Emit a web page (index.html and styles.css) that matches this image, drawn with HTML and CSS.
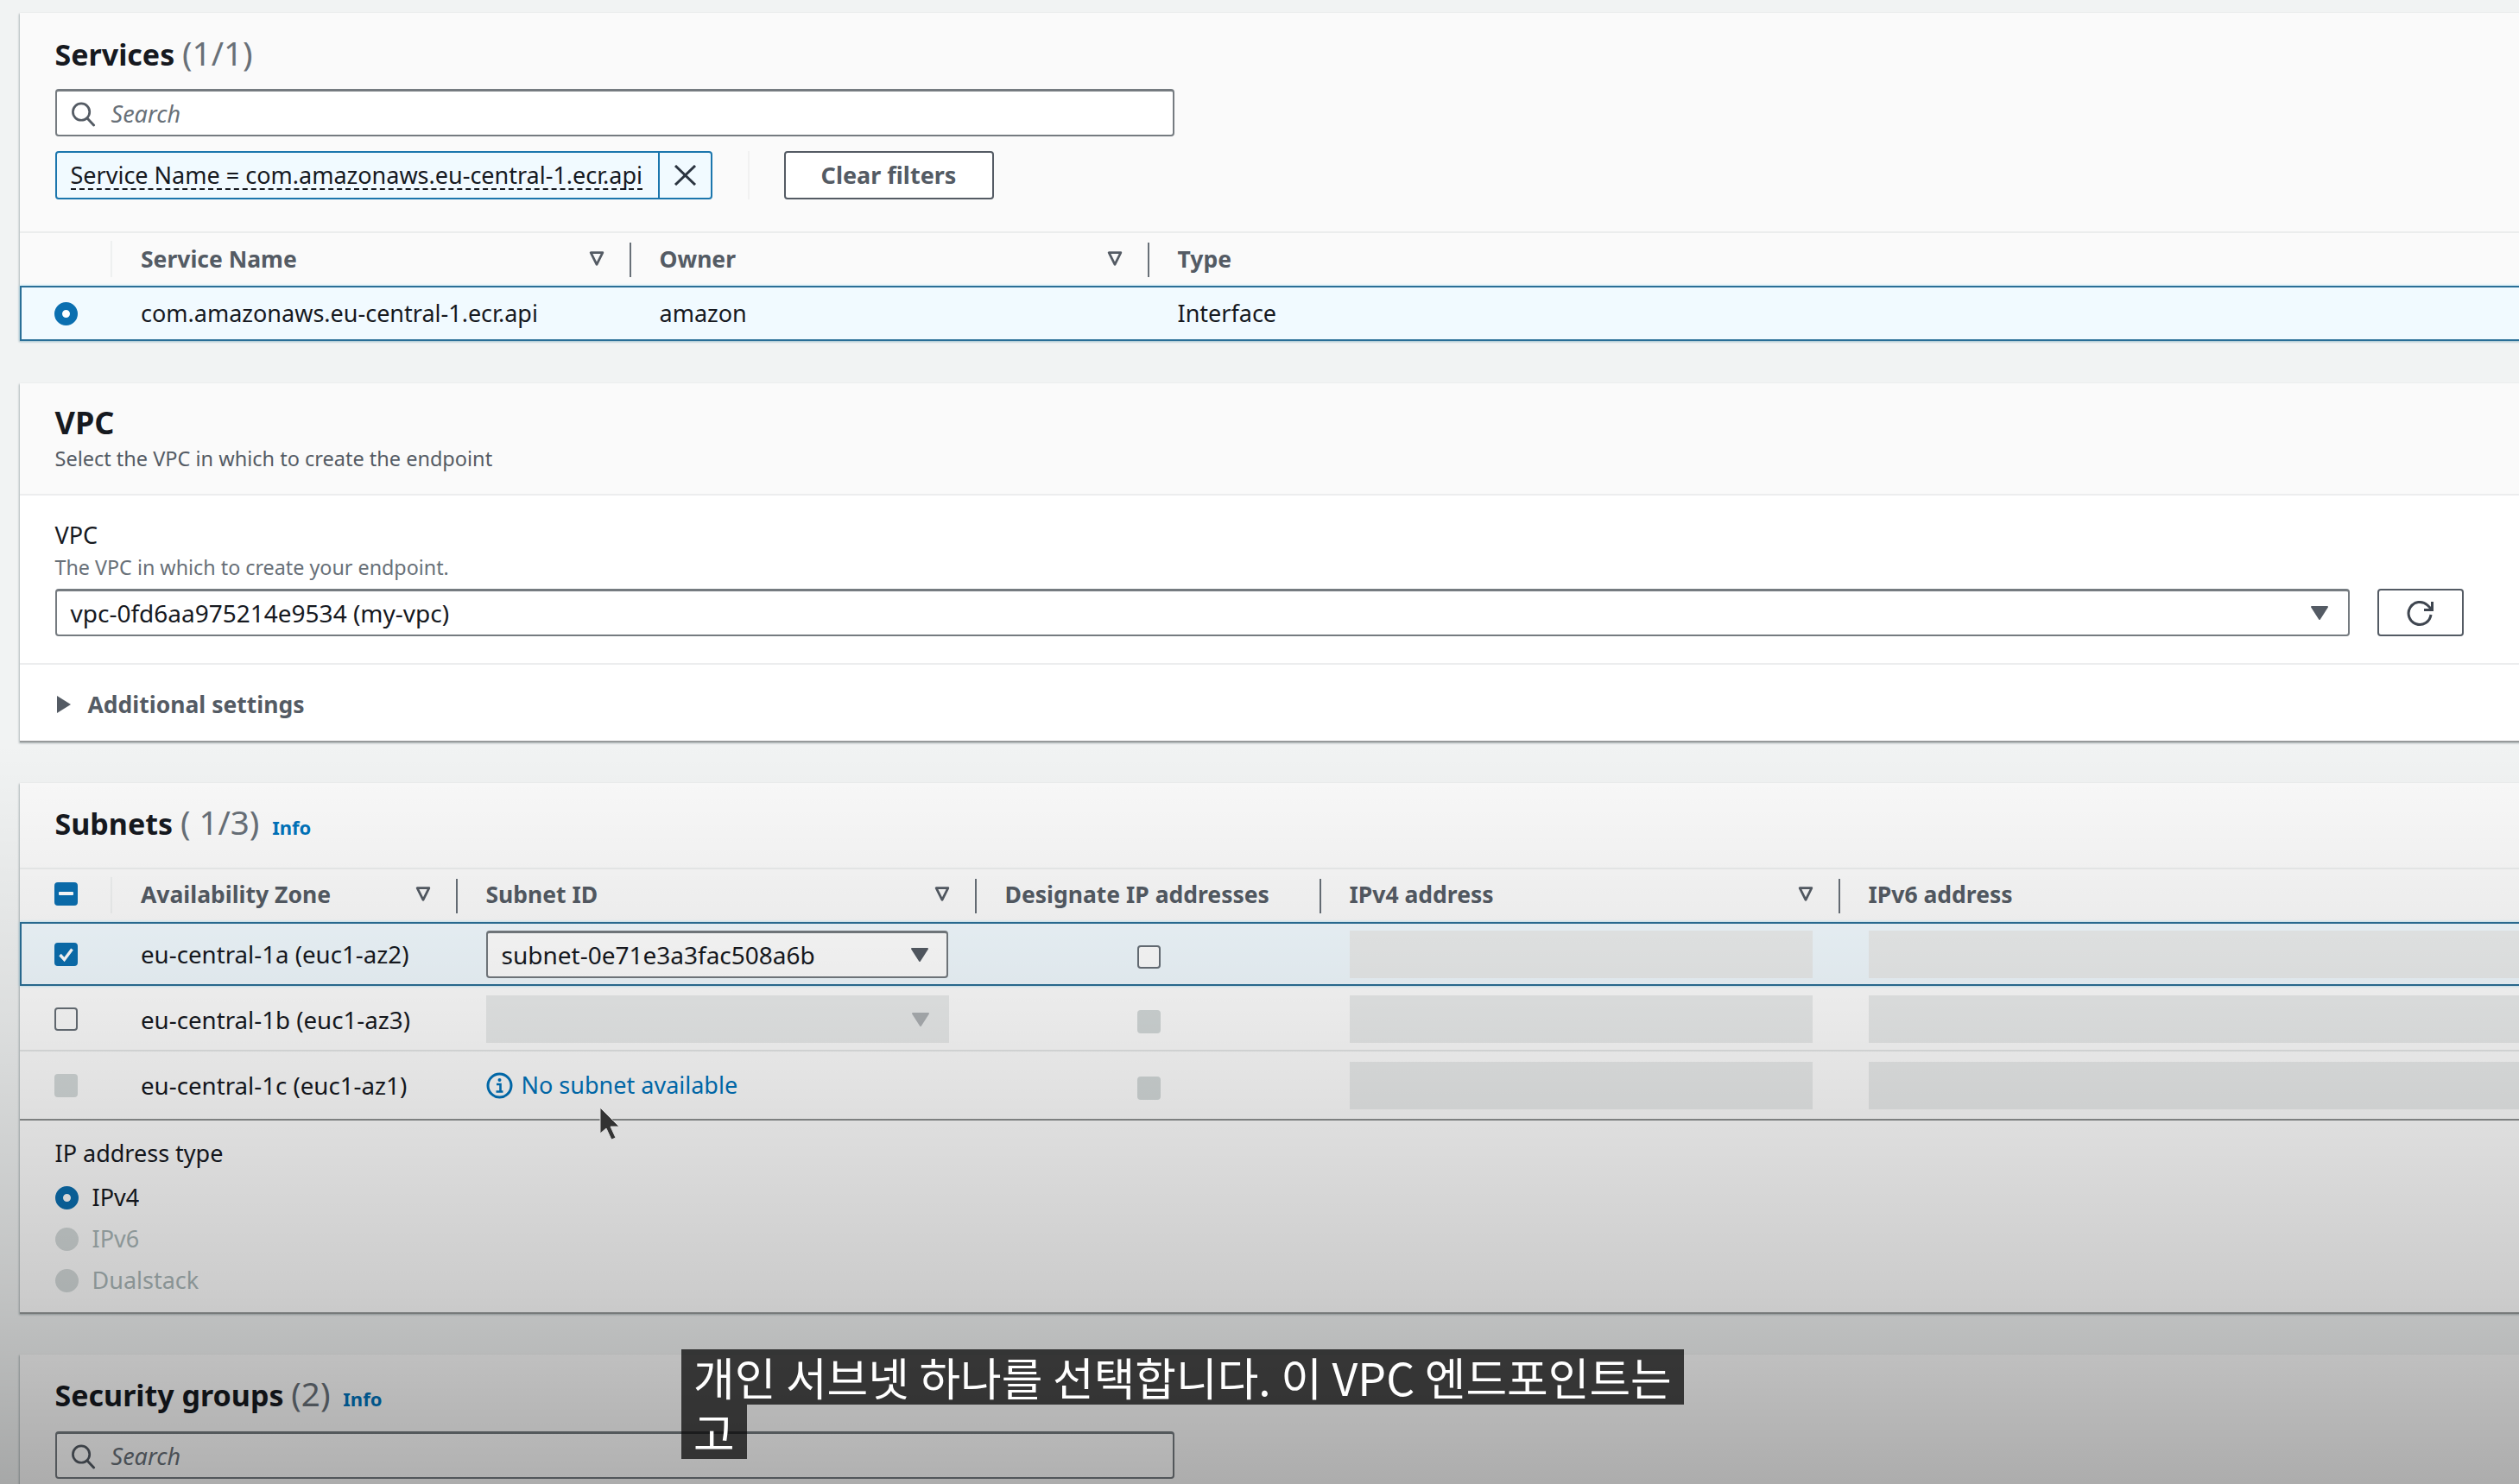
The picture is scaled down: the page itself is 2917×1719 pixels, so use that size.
FILE: index.html
```html
<!DOCTYPE html>
<html lang="en">
<head>
<meta charset="utf-8">
<title>Create endpoint</title>
<link rel="stylesheet" href="styles.css">
</head>
<body>
<svg class="defs" width="0" height="0" aria-hidden="true">
  <symbol id="sort" viewBox="0 0 18 18"><path d="M2.5 2.5h13L9 15.5z" fill="none" stroke="#545b64" stroke-width="2.6" stroke-linejoin="round"/></symbol>
  <symbol id="search" viewBox="0 0 30 30"><circle cx="12.5" cy="12.5" r="10" fill="none" stroke="#545b64" stroke-width="2.8"/><path d="M19.5 20l8 8.5" fill="none" stroke="#545b64" stroke-width="3" stroke-linecap="round"/></symbol>
  <symbol id="caret" viewBox="0 0 22 18"><path d="M2 2h18L11 16z" fill="#545b64" stroke="#545b64" stroke-width="2" stroke-linejoin="round"/></symbol>
</svg>
<main class="page">
  <section class="card card-services">
    <div class="card-head filters">
      <h2 class="title">Services <span class="count">(1/1)</span></h2>
      <div class="search"><svg class="search-icon"><use href="#search"/></svg><span class="placeholder">Search</span></div>
      <div class="filter-row">
        <div class="token"><span class="token-text"><span class="token-label">Service Name = com.amazonaws.eu-central-1.ecr.api</span></span>
          <span class="token-x"><svg width="27" height="24" viewBox="0 0 27 24"><path d="M2 1l23 22M25 1L2 23" stroke="#2b3440" stroke-width="3" fill="none"/></svg></span></div>
        <span class="faint-sep"></span>
        <div class="btn">Clear filters</div>
      </div>
    </div>
    <div class="grid grid-services thead">
      <div class="cell first"><span class="faint-bar"></span></div>
      <div class="cell th"><span>Service Name</span><svg class="sort"><use href="#sort"/></svg><i class="sep"></i></div>
      <div class="cell th"><span>Owner</span><svg class="sort"><use href="#sort"/></svg><i class="sep"></i></div>
      <div class="cell th"><span>Type</span></div>
    </div>
    <div class="grid grid-services row selected service-row">
      <div class="cell first"><span class="radio on"></span></div>
      <div class="cell">com.amazonaws.eu-central-1.ecr.api</div>
      <div class="cell">amazon</div>
      <div class="cell">Interface</div>
    </div>
  </section>

  <section class="card bordered card-vpc">
    <div class="card-head vpc-head">
      <h2 class="title">VPC</h2>
      <p class="sub">Select the VPC in which to create the endpoint</p>
    </div>
    <div class="vpc-body">
      <div class="label">VPC</div>
      <div class="desc">The VPC in which to create your endpoint.</div>
      <div class="select-row">
        <div class="select"><span>vpc-0fd6aa975214e9534 (my-vpc)</span><svg class="caret"><use href="#caret"/></svg></div>
        <div class="btn refresh"><svg width="34" height="34" viewBox="0 0 34 34"><path d="M29 19a13 13 0 1 1-4-11l4 4" fill="none" stroke="#3f4650" stroke-width="3"/><path d="M30.500 4v9.500H21" fill="none" stroke="#3f4650" stroke-width="3"/></svg></div>
      </div>
    </div>
    <div class="expander"><svg width="18" height="22" viewBox="0 0 18 22"><path d="M1 1l16 10L1 21z" fill="#545b64"/></svg><span>Additional settings</span></div>
  </section>

  <section class="card bordered">
    <div class="card-head subnets-head">
      <h2 class="title">Subnets <span class="count">( 1/3)</span> <a class="info">Info</a></h2>
    </div>
    <div class="grid grid-subnets thead thead-subnets">
      <div class="cell first"><span class="check on"><svg width="17" height="5" viewBox="0 0 17 5"><rect width="17" height="4" rx="1" fill="#fff"/></svg></span><span class="faint-bar"></span></div>
      <div class="cell th"><span>Availability Zone</span><svg class="sort"><use href="#sort"/></svg><i class="sep"></i></div>
      <div class="cell th"><span>Subnet ID</span><svg class="sort"><use href="#sort"/></svg><i class="sep"></i></div>
      <div class="cell th"><span>Designate IP addresses</span><i class="sep"></i></div>
      <div class="cell th"><span>IPv4 address</span><svg class="sort"><use href="#sort"/></svg><i class="sep"></i></div>
      <div class="cell th"><span>IPv6 address</span></div>
    </div>
    <div class="grid grid-subnets row selected r1">
      <div class="cell first"><span class="check on"><svg width="19" height="17" viewBox="0 0 19 17"><path d="M2.500 9l5 5.500L16.500 2.500" fill="none" stroke="#fff" stroke-width="3.400"/></svg></span></div>
      <div class="cell az">eu-central-1a (euc1-az2)</div>
      <div class="cell"><div class="select small"><span>subnet-0e71e3a3fac508a6b</span><svg class="caret"><use href="#caret"/></svg></div></div>
      <div class="cell center"><span class="check low"></span></div>
      <div class="cell"><div class="ghost"></div></div>
      <div class="cell"><div class="ghost wide"></div></div>
    </div>
    <div class="grid grid-subnets row r2">
      <div class="cell first"><span class="check"></span></div>
      <div class="cell az">eu-central-1b (euc1-az3)</div>
      <div class="cell"><div class="ghost sel"><svg class="caret faded"><use href="#caret"/></svg></div></div>
      <div class="cell center"><span class="check off low"></span></div>
      <div class="cell"><div class="ghost"></div></div>
      <div class="cell"><div class="ghost wide"></div></div>
    </div>
    <div class="grid grid-subnets row r3">
      <div class="cell first"><span class="check off"></span></div>
      <div class="cell az">eu-central-1c (euc1-az1)</div>
      <div class="cell no-subnet"><svg width="31" height="31" viewBox="0 0 31 31"><circle cx="15.500" cy="15.500" r="13.500" fill="none" stroke="#0073bb" stroke-width="3"/><circle cx="15.500" cy="9" r="2" fill="#0073bb"/><path d="M12 14h4.500v8M11.500 22.500h8" fill="none" stroke="#0073bb" stroke-width="2.600"/></svg><span>No subnet available</span></div>
      <div class="cell center"><span class="check off low"></span></div>
      <div class="cell"><div class="ghost"></div></div>
      <div class="cell"><div class="ghost wide"></div></div>
    </div>
    <div class="ip-type">
      <div class="label">IP address type</div>
      <div class="radios">
        <div class="radio-row"><span class="radio on"></span><span>IPv4</span></div>
        <div class="radio-row dim"><span class="radio off"></span><span>IPv6</span></div>
        <div class="radio-row dim"><span class="radio off"></span><span>Dualstack</span></div>
      </div>
    </div>
  </section>

  <section class="card">
    <div class="card-head filters sg">
      <h2 class="title">Security groups <span class="count">(2)</span> <a class="info">Info</a></h2>
      <div class="search"><svg class="search-icon"><use href="#search"/></svg><span class="placeholder">Search</span></div>
    </div>
  </section>
</main>

<div class="shade"></div>
<svg class="cursor" width="28" height="40" viewBox="0 0 28 40"><path d="M2 1v30l7-6 6 13 5-2-6-13h10z" fill="#333" stroke="#ddd" stroke-width="1"/></svg>
<div class="caption">
  <div class="caption-line">개인 서브넷 하나를 선택합니다. 이 VPC 엔드포인트는</div>
  <div class="caption-line">고</div>
</div>
</body>
</html>
```
FILE: styles.css
```css
* { box-sizing: border-box; }
html, body { margin: 0; height: 100%; overflow: hidden; }
body {
  position: relative;
  background: #f1f3f3;
  color: #16191f;
  font-family: "Noto Sans", "Open Sans", "Liberation Sans", sans-serif;
  font-size: 27px;
  line-height: 34px;
}
.defs { position: absolute; }
.page { width: 3000px; margin-left: 23px; padding-top: 15px; }

.card {
  background: #fff;
  margin-bottom: 47px;
  box-shadow: -1px 1px 2px rgba(0, 28, 36, .28);
}
.card-services { margin-bottom: 49px; }
.card.bordered { border-bottom: 2px solid #979a9b; }
.card-head { background: #fafafa; }
.title { margin: 0; font-size: 34px; line-height: 50px; font-weight: 700; color: #16191f; }
.vpc-head .title { font-size: 36px; }
.count { font-weight: 400; font-size: 38.500px; line-height: 1; color: #687078; }
.info { font-size: 22px; line-height: 1; font-weight: 700; color: #0073bb; margin-left: 6px; }

.filters { padding: 23px 41px 37px 40.500px; }
.filters .title { margin-bottom: 15px; }
.sg { padding-top: 22px; padding-bottom: 8px; }
.sg .title { margin-bottom: 17px; }
.search {
  width: 1296px; height: 55px; display: flex; align-items: center; gap: 18px;
  padding: 2px 0 0 16px; background: #fff;
  border: 2px solid #757b80; border-top-width: 3px; border-radius: 4px;
}
.search-icon { width: 29px; height: 30px; flex: none; }
.placeholder { font-style: italic; color: #687078; font-size: 27px; }
.filter-row { display: flex; align-items: stretch; height: 56px; margin-top: 17px; }
.token { width: 761px; display: flex; background: #f1faff; border: 2px solid #1b76ad; border-radius: 4px; }
.token-text { flex: 1; padding: 0 0 0 16px; display: flex; align-items: center; white-space: nowrap; overflow: hidden; }
.token-label { border-bottom: 2px dashed #16191f; line-height: 31px; }
.token-x { width: 61px; flex: none; display: flex; align-items: center; justify-content: center; border-left: 2px solid #1b76ad; }
.faint-sep { width: 2px; margin-left: 41px; background: #f1f1f1; }
.btn {
  display: flex; align-items: center; justify-content: center;
  width: 243px; margin-left: 40px; background: #fff;
  border: 2px solid #545b64; border-radius: 4px;
  color: #545b64; font-weight: 700; font-size: 27px;
}

.grid { display: grid; width: 100%; background: #fff; }
.grid-services { grid-template-columns: 106.500px 600.500px 600px 1fr; }
.grid-subnets { grid-template-columns: 106.500px 399.500px 601px 399px 601px 1fr; }
.thead { height: 63px; padding-bottom: 2px; background: #fafafa; border-top: 2px solid #ebeded; }
.thead-subnets { padding-bottom: 4px; }
.cell { position: relative; display: flex; align-items: center; padding-left: 33.500px; min-width: 0; white-space: nowrap; color: #16191f; }
.first { padding-left: 40px; }
.az { font-size: 27.700px; }
.th { font-weight: 700; color: #545b64; font-size: 26.500px; }
.sort { position: absolute; right: 29px; top: 50%; margin-top: -10px; width: 20px; height: 19px; }
.sep { position: absolute; right: -1px; top: 11px; height: 40px; width: 2px; background: #687078; }
.faint-bar { position: absolute; right: 0; top: 9px; width: 2px; height: 42px; background: #eef0f0; }
.center { justify-content: center; padding-left: 2px; }

.row { border-bottom: 2px solid #e6e8e8; }
.selected {
  background: #f1faff;
  border-bottom: 0;
  box-shadow: inset 0 0 0 2px #2a6f97, 0 0 3px #a8dcf0;
  position: relative;
}
.service-row { height: 64px; }
.r1 { height: 74px; }
.r2 { height: 76px; padding-top: 3px; }
.r3 { height: 78px; border-bottom: 0; }

.radio { width: 27px; height: 27px; border-radius: 50%; display: inline-block; flex: none; }
.radio.on { background: #fff; border: 9px solid #0b6fb0; }
.radio.off { background: #d5dbdb; }
.check {
  width: 27px; height: 27px; flex: none; display: inline-flex; align-items: center; justify-content: center;
  border-radius: 4px; border: 2px solid #687078; background: #fff;
}
.check.on { background: #0b6fb0; border-color: #0b6fb0; }
.check.off { background: #d5dbdb; border-color: #d5dbdb; }
.check.low { margin-top: 6px; }

.vpc-head { padding: 21px 41px 23px 40.500px; }
.sub { margin: -1px 0 1px; font-size: 23.500px; color: #545b64; }
.vpc-body { padding: 29px 41px 31px 40.500px; border-top: 2px solid #ecedee; border-bottom: 2px solid #ecedee; }
.label { color: #16191f; font-size: 27px; }
.desc { font-size: 23.300px; color: #687078; margin-top: 3px; }
.select-row { display: flex; gap: 32px; margin-top: 8px; height: 55px; }
.select {
  width: 2657px; height: 55px; display: flex; align-items: center; justify-content: space-between;
  padding: 0 22px 0 16px; background: #fff; border: 2px solid #757b80; border-top-width: 3px; border-radius: 4px;
  font-size: 28px;
}
.caret { width: 22px; height: 18px; flex: none; }
.refresh { width: 100px; margin-left: 0; }
.expander { height: 88px; display: flex; align-items: center; gap: 19px; padding: 4px 0 0 41.500px; font-weight: 700; color: #545b64; font-size: 26.500px; }

.subnets-head { padding: 22px 41px 26px 40.500px; }
.select.small { width: 535px; height: 55px; padding-right: 20px; }
.ghost { width: 536px; height: 55px; background: #ebeded; }
.ghost.wide { width: 1000px; }
.ghost.sel { display: flex; align-items: center; justify-content: flex-end; padding-right: 22px; }
.faded { opacity: .4; }
.no-subnet { gap: 10px; color: #0073bb; }
.no-subnet svg { flex: none; }
.ip-type { border-top: 2px solid #8f9292; padding: 21px 41px 13px 40.500px; }
.radios { margin-top: 10px; }
.radio-row { display: flex; align-items: center; gap: 16px; height: 48px; font-size: 27px; }
.dim { color: #aab7b8; }

.shade {
  position: absolute; left: 0; right: 0; top: 860px; bottom: 0; pointer-events: none;
  background: linear-gradient(to bottom, rgba(0, 0, 0, 0), rgba(0, 0, 0, .085) 37%, rgba(0, 0, 0, .2) 74.500%, rgba(0, 0, 0, .31));
}
.cursor { position: absolute; left: 693px; top: 1282px; }
.caption {
  position: absolute; left: 789px; top: 1563px;
  display: flex; flex-direction: column; align-items: flex-start;
  font-family: "Noto Sans CJK KR", "Noto Sans", sans-serif;
  font-size: 51.800px; color: #fff;
}
.caption-line { height: 63.500px; line-height: 63px; padding: 0 14px; background: rgba(8, 8, 8, .75); white-space: nowrap; }
```
